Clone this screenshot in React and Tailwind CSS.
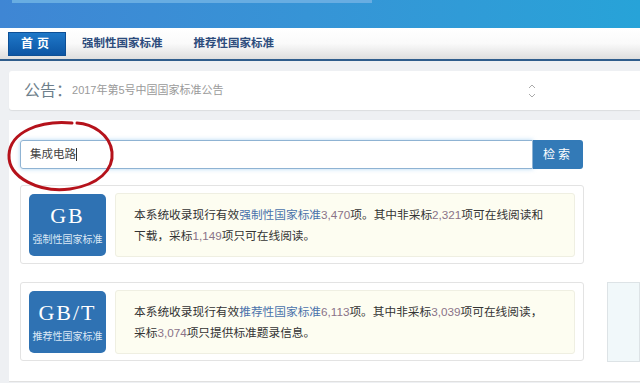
import React from "react";

const cn = { fontFamily: '"Liberation Sans", "Noto Sans CJK SC", sans-serif' };

function RedCircle() {
  // hand drawn annotation around the search box
  return (
    <svg className="absolute left-0 top-[118px] pointer-events-none" width="130" height="80" viewBox="0 0 130 80">
      <path
        d="M72 5 C 40 2, 10 14, 9 37 C 8 60, 40 75, 70 71 C 98 67, 114 52, 112 34 C 110 16, 92 6, 77 5"
        fill="none"
        stroke="#b5121b"
        strokeWidth="3"
        strokeLinecap="round"
      />
    </svg>
  );
}

function StdCard({ code, label, lines }) {
  return (
    <div className="w-[564px] h-[79px] border border-[#e3e3e3] rounded-[3px] bg-white flex items-center px-[8px] gap-[9px]">
      <div className="w-[77px] h-[62px] rounded-[5px] bg-[#2f72b3] flex flex-col items-center justify-center text-white">
        <div className="text-[22px] leading-[26px] tracking-[2px]" style={{ fontFamily: '"Liberation Serif", serif' }}>
          {code}
        </div>
        <div className="text-[10px] leading-[14px] mt-[4px] text-[#dce8f5]">{label}</div>
      </div>
      <div className="flex-1 h-[64px] bg-[#fdfdf1] border border-[#efefe2] rounded-[3px] pl-[18px] flex flex-col justify-center text-[11.7px] leading-[21px] text-[#333]">
        {lines}
      </div>
    </div>
  );
}

const blue = "text-[#4a72ab]";
const num = "text-[#8a7388]";

export default function App() {
  return (
    <div className="w-[640px] h-[383px] overflow-hidden bg-[#eef0f3] relative" style={cn}>
      <div className="h-[28px] bg-gradient-to-r from-[#3f86d4] to-[#27a3d8]">
        <div className="ml-[12px] w-[360px] h-[3px] bg-[#68ade2]" />
      </div>
      <div className="h-[33px] bg-gradient-to-b from-white via-[#fafafa] to-[#dedede] border-b-2 border-[#2f5d8c] flex items-center pl-[8px]">
        <div className="w-[58px] h-[24px] bg-gradient-to-b from-[#1f78c8] to-[#0c55a4] border border-[#0d4f95] text-white text-[12px] font-bold flex items-center justify-center tracking-[4px]">
          首页
        </div>
        <div className="ml-[16px] text-[11.5px] font-bold text-[#2d4c7c]">强制性国家标准</div>
        <div className="ml-[31px] text-[11.5px] font-bold text-[#2d4c7c]">推荐性国家标准</div>
      </div>
      <div className="pl-[9px] pt-[10px]">
        <div className="h-[39px] bg-white rounded-l-[3px] shadow-[0_1px_1px_rgba(0,0,0,0.08)] flex items-center pl-[15px]">
          <span className="text-[16px] text-[#6e7f8c]">公告：</span>
          <span className="text-[11px] text-[#9a9a9a]">2017年第5号中国国家标准公告</span>
          <div className="ml-auto mr-[104px] flex flex-col items-center text-[#aaa] leading-none">
            <svg width="8" height="6" viewBox="0 0 8 6"><path d="M1 5 L4 2 L7 5" fill="none" stroke="#aaa" strokeWidth="1" /></svg>
            <svg width="8" height="6" viewBox="0 0 8 6" className="mt-[4px]"><path d="M1 1 L4 4 L7 1" fill="none" stroke="#aaa" strokeWidth="1" /></svg>
          </div>
        </div>
        <div className="mt-[10px] h-[262px] bg-white border-b border-[#e0e0e0] pl-[11px] pt-[20px]">
          <div className="flex">
            <div className="w-[513px] h-[29px] border border-[#8fb3d3] rounded-l-[3px] shadow-[0_0_4px_rgba(102,175,233,0.5)] flex items-center pl-[9px] text-[11.5px] text-[#444]">
              集成电路<span className="w-px h-[13px] bg-[#333]" />
            </div>
            <div className="w-[50px] h-[29px] bg-[#337ab7] rounded-r-[3px] text-white text-[12px] flex items-center justify-center tracking-[3px]">
              检索
            </div>
          </div>
          <div className="mt-[16px]">
            <StdCard
              code="GB"
              label="强制性国家标准"
              lines={
                <>
                  <div>
                    本系统收录现行有效<span className={blue}>强制性国家标准</span>
                    <span className={num}>3,470</span>项。其中非采标<span className={num}>2,321</span>项可在线阅读和
                  </div>
                  <div>
                    下载，采标<span className={num}>1,149</span>项只可在线阅读。
                  </div>
                </>
              }
            />
          </div>
          <div className="mt-[18px] flex items-start">
            <StdCard
              code="GB/T"
              label="推荐性国家标准"
              lines={
                <>
                  <div>
                    本系统收录现行有效<span className={blue}>推荐性国家标准</span>
                    <span className={num}>6,113</span>项。其中非采标<span className={num}>3,039</span>项可在线阅读，
                  </div>
                  <div>
                    采标<span className={num}>3,074</span>项只提供标准题录信息。
                  </div>
                </>
              }
            />
            <div className="ml-[23px] flex-1 h-[80px] bg-[#f1f8fa] border border-[#dde3e6]" />
          </div>
        </div>
      </div>
      <RedCircle />
    </div>
  );
}
